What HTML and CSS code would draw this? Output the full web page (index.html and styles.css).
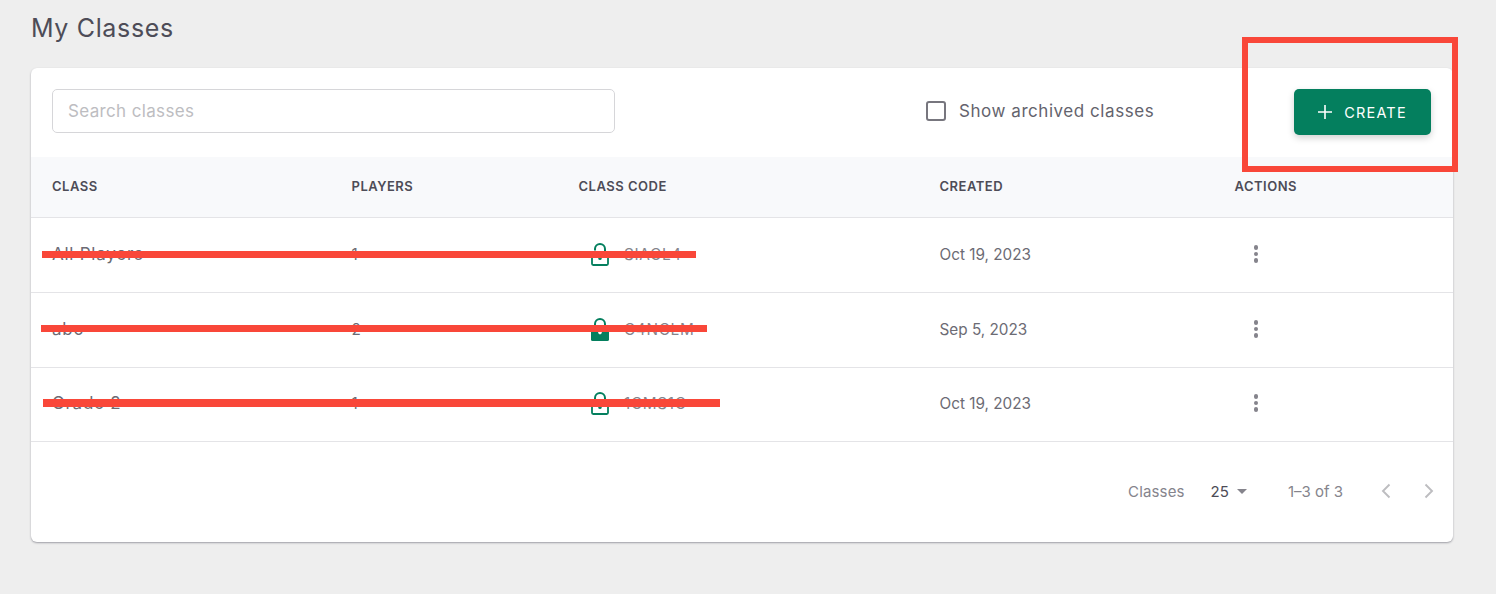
FILE: index.html
```html
<!DOCTYPE html>
<html lang="en">
<head>
<meta charset="utf-8">
<title>My Classes</title>
<link rel="stylesheet" href="styles.css">
</head>
<body>
<main class="page">
  <h1 class="title">My Classes</h1>
  <section class="card">
    <div class="toolbar">
      <div class="search">Search classes</div>
      <label class="archived"><span class="checkbox"></span><span>Show archived classes</span></label>
      <button class="create" type="button">
        <svg class="plus" viewBox="0 0 14 14" width="14" height="14"><path d="M7 0v14M0 7h14" stroke="#fff" stroke-width="1.6" fill="none"/></svg>
        <span>CREATE</span>
      </button>
    </div>
    <div class="row head">
      <div>CLASS</div><div>PLAYERS</div><div>CLASS CODE</div><div>CREATED</div><div>ACTIONS</div>
    </div>
    <div class="row body">
      <div class="name">All Players</div><div>1</div>
      <div class="code">
        <svg class="lock" viewBox="0 0 18 23" width="18" height="23"><path d="M4 7.500V6a5 5 0 0 1 10 0v3.400" fill="none" stroke="#047f5e" stroke-width="2"/><rect x="1" y="9.600" width="16" height="12.400" rx="1.200" fill="none" stroke="#047f5e" stroke-width="1.800"/><circle cx="9" cy="15.400" r="1.700" fill="#047f5e"/></svg>
        <span>SIACL4</span>
      </div>
      <div>Oct 19, 2023</div>
      <div class="dots"><i></i><i></i><i></i></div>
    </div>
    <div class="row body">
      <div class="name">abc</div><div>2</div>
      <div class="code">
        <svg class="lock" viewBox="0 0 18 23" width="18" height="23"><path d="M4 10V6a5 5 0 0 1 10 0v4" fill="none" stroke="#047f5e" stroke-width="2"/><rect x="0" y="9" width="18" height="14" rx="1.600" fill="#047f5e"/><circle cx="9" cy="14.600" r="1.800" fill="#fff"/></svg>
        <span>C4NCLM</span>
      </div>
      <div>Sep 5, 2023</div>
      <div class="dots"><i></i><i></i><i></i></div>
    </div>
    <div class="row body body-last">
      <div class="name">Grade 2</div><div>1</div>
      <div class="code">
        <svg class="lock" viewBox="0 0 18 23" width="18" height="23"><path d="M4 7.500V6a5 5 0 0 1 10 0v3.400" fill="none" stroke="#047f5e" stroke-width="2"/><rect x="1" y="9.600" width="16" height="12.400" rx="1.200" fill="none" stroke="#047f5e" stroke-width="1.800"/><circle cx="9" cy="15.400" r="1.700" fill="#047f5e"/></svg>
        <span>1CMS1C</span>
      </div>
      <div>Oct 19, 2023</div>
      <div class="dots"><i></i><i></i><i></i></div>
    </div>
    <div class="pager">
      <span class="pager-label">Classes</span>
      <span class="pager-size">25<span class="caret"></span></span>
      <span class="pager-range">1–3 of 3</span>
      <svg class="chev chev-prev" viewBox="0 0 10 16" width="10" height="16"><path d="M8.500 1.500 2 8l6.500 6.500" fill="none" stroke="#bdbdc0" stroke-width="1.900"/></svg>
      <svg class="chev" viewBox="0 0 10 16" width="10" height="16"><path d="M1.500 1.500 8 8l-6.500 6.500" fill="none" stroke="#bdbdc0" stroke-width="1.900"/></svg>
    </div>
  </section>
</main>
<div class="mark strike strike-1"></div>
<div class="mark strike strike-2"></div>
<div class="mark strike strike-3"></div>
<div class="mark frame"></div>
</body>
</html>
```
FILE: styles.css
```css
* { box-sizing: border-box; }
html, body { margin: 0; height: 100%; }
body {
  background: #eeeeee;
  color: #4d4c57;
  font-family: Inter, "Liberation Sans", sans-serif;
  overflow: hidden;
  position: relative;
}
.page { padding: 0 43px 0 31px; }
.title {
  margin: 0;
  height: 68px;
  padding-top: 12px;
  font-size: 25px;
  line-height: 32px;
  font-weight: 400;
  letter-spacing: .65px;
  color: #4d4c57;
}
.card {
  height: 474px;
  background: #fff;
  border-radius: 6px;
  box-shadow: 0 1px 2px rgba(60, 60, 75, .45);
  overflow: hidden;
}
.toolbar {
  height: 89px;
  padding: 21px 22px 0 21px;
  display: flex;
  align-items: flex-start;
}
.search {
  width: 563px;
  height: 44px;
  border: 1px solid #d6d6d9;
  border-radius: 5px;
  padding: 0 15px;
  line-height: 42px;
  font-size: 17px;
  letter-spacing: .35px;
  color: #bdbdc1;
}
.archived {
  margin-left: 311px;
  height: 44px;
  display: flex;
  align-items: center;
  gap: 13px;
  font-size: 17px;
  letter-spacing: .55px;
  color: #64636d;
}
.checkbox {
  width: 20px;
  height: 20px;
  border: 2.5px solid #77767e;
  border-radius: 3px;
}
.create {
  margin-left: auto;
  width: 137px;
  height: 46px;
  border: 0;
  border-radius: 5px;
  background: #047f5e;
  color: #fff;
  font: inherit;
  font-size: 14.5px;
  letter-spacing: 1.2px;
  display: flex;
  align-items: center;
  justify-content: center;
  gap: 12px;
  box-shadow: 0 3px 7px rgba(0, 0, 0, .18);
}
.row {
  display: grid;
  grid-template-columns: 299.500px 227px 361px 295px 1fr;
  padding-left: 21px;
  align-items: center;
  border-bottom: 1px solid #e4e4e7;
}
.head {
  height: 61px;
  padding-bottom: 2px;
  background: #f8f9fb;
  font-size: 13px;
  font-weight: 600;
  letter-spacing: .5px;
  color: #4d4c57;
}
.body {
  height: 75px;
  padding-bottom: 2px;
  font-size: 15.300px;
  color: #6c6b74;
}
.body-last { height: 74px; padding-bottom: 3px; }
.name {
  font-size: 17px;
  letter-spacing: .75px;
}
.code {
  display: flex;
  align-items: center;
  gap: 15px;
  padding-left: 12.500px;
  letter-spacing: .7px;
  color: #85848c;
}
.lock { display: block; }
.dots {
  display: flex;
  flex-direction: column;
  gap: 2px;
  padding-left: 19px;
}
.dots i {
  width: 4.500px;
  height: 4.500px;
  border-radius: 50%;
  background: #85848c;
}
.pager {
  height: 101px;
  padding-bottom: 3px;
  display: flex;
  align-items: center;
  justify-content: flex-end;
  padding-right: 19px;
  font-size: 15px;
  color: #85848c;
}
.pager-label { letter-spacing: .15px; }
.pager-size {
  margin-left: 26px;
  display: flex;
  align-items: center;
  gap: 8px;
  color: #4d4c57;
}
.caret {
  width: 0;
  height: 0;
  border: 5.500px solid transparent;
  border-top-color: #85848c;
  border-bottom: 0;
}
.pager-range { margin-left: 41px; }
.chev { margin-left: 33px; }
.chev-prev { margin-left: 38px; }
.mark { position: absolute; }
.strike { background: #f94739; }
.strike-1 { left: 42px; top: 251px; width: 654px; height: 7px; }
.strike-2 { left: 41px; top: 325px; width: 666px; height: 7px; }
.strike-3 { left: 43px; top: 399px; width: 677px; height: 8px; }
.frame {
  left: 1242px;
  top: 37px;
  width: 216px;
  height: 135px;
  border: 6px solid #f94739;
}
```
